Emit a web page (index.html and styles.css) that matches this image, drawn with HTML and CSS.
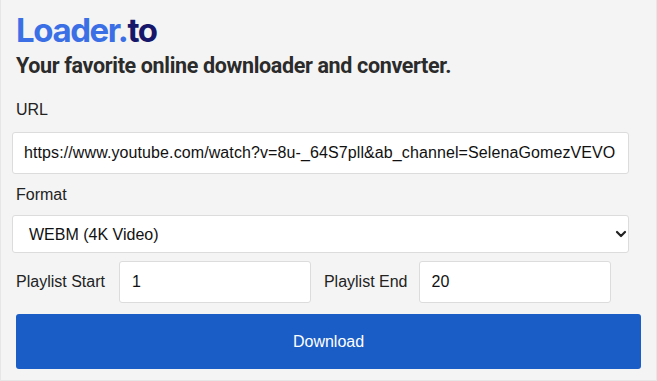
FILE: index.html
```html
<!DOCTYPE html>
<html lang="en">
<head>
  <meta charset="UTF-8">
  <meta name="viewport" content="width=device-width, initial-scale=1.0">
  <title>Loader.to</title>
  <link rel="stylesheet" href="styles.css">
</head>
<body>
  <div class="page">
    <h1 class="logo"><span class="logo-main">Loader.</span><span class="logo-tld">to</span></h1>
    <h2 class="tagline">Your favorite online downloader and converter.</h2>

    <form id="download-form" action="#" method="post">
      <label for="url">URL</label>
      <input type="text" id="url" name="url" class="field" value="https://www.youtube.com/watch?v=8u-_64S7pll&amp;ab_channel=SelenaGomezVEVO">

      <label for="format">Format</label>
      <div class="select-wrap">
        <select id="format" name="format" class="field">
          <option value="webm4k">WEBM (4K Video)</option>
          <option value="mp4">MP4 (1080p)</option>
          <option value="mp3">MP3</option>
        </select>
        <svg class="chevron" width="12" height="8" viewBox="0 0 12 8"><path d="M2 2l4 4 4-4" fill="none" stroke="#222" stroke-width="2.2" stroke-linecap="round" stroke-linejoin="round"/></svg>
      </div>

      <div class="playlist-row">
        <label for="start">Playlist Start</label>
        <input type="number" id="start" name="start" class="field small" value="1">
        <label for="end">Playlist End</label>
        <input type="number" id="end" name="end" class="field small" value="20">
      </div>

      <button type="submit">Download</button>
    </form>
  </div>
</body>
</html>
```

FILE: styles.css
```css
body {
  margin: 0;
  padding: 0;
  background-color: #f4f4f4;
  font-family: "Liberation Sans", Arial, sans-serif;
  color: #222;
}
.page {
  box-sizing: border-box;
  width: 657px;
  height: 381px;
  padding: 13px 15px 0 15px;
  border-left: 1px solid #e6e6e6;
  border-right: 1px solid #e6e6e6;
  border-bottom: 1px solid #e6e6e6;
}
.logo {
  margin: 0;
  font-family: Inter, "Liberation Sans", sans-serif;
  font-size: 33px;
  font-weight: 700;
  line-height: 34px;
  letter-spacing: -1.4px;
}
.logo-main {
  color: #3a6fe6;
}
.logo-tld {
  color: #16176b;
}
.tagline {
  margin: 5px 0 0 0;
  font-family: Roboto, "Liberation Sans", sans-serif;
  font-size: 21.5px;
  font-weight: 700;
  line-height: 28px;
  color: #2b2b2b;
  letter-spacing: -0.35px;
}
form {
  margin-top: 20px;
}
label {
  display: block;
  font-size: 16px;
  line-height: 20px;
  color: #222;
}
.field {
  box-sizing: border-box;
  display: block;
  width: 617px;
  margin-left: -4px;
  background: #fff;
  border: 1px solid #dcdcdc;
  border-radius: 3px;
  font-family: "Liberation Sans", Arial, sans-serif;
  font-size: 16px;
  color: #111;
  outline: none;
}
#url {
  height: 42px;
  margin-top: 12px;
  padding: 0 11px;
  letter-spacing: 0.1px;
}
label[for="format"] {
  margin-top: 11px;
}
.select-wrap {
  position: relative;
  margin-top: 10px;
}
select.field {
  height: 38px;
  padding: 0 16px;
  appearance: none;
  -webkit-appearance: none;
}
.chevron {
  position: absolute;
  right: 14px;
  top: 15px;
}
.playlist-row {
  display: flex;
  align-items: center;
  margin-top: 8px;
}
.playlist-row label {
  white-space: nowrap;
}
.field.small {
  width: 192px;
  height: 42px;
  margin-left: 14px;
  padding: 0 12px;
  -moz-appearance: textfield;
}
#end {
  margin-left: 11px;
}
.field.small::-webkit-inner-spin-button,
.field.small::-webkit-outer-spin-button {
  -webkit-appearance: none;
  margin: 0;
}
label[for="end"] {
  margin-left: 13px;
}
button {
  display: block;
  width: 625px;
  height: 55px;
  margin-top: 11px;
  background-color: #1a5dc6;
  color: #fff;
  border: none;
  border-radius: 3px;
  font-family: "Liberation Sans", Arial, sans-serif;
  font-size: 16px;
  cursor: pointer;
}
button:hover {
  background-color: #154fa8;
}
```
